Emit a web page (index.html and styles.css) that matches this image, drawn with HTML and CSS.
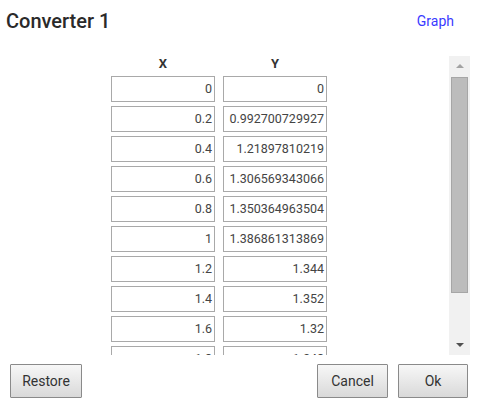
FILE: index.html
```html
<!DOCTYPE html>
<html>
<head>
<meta charset="utf-8">
<link rel="stylesheet" href="styles.css">
</head>
<body>
<div class="dialog">
  <div class="header">
    <div class="title">Converter 1</div>
    <a class="link">Graph</a>
  </div>
  <div class="main">
    <div class="list">
      <div class="grid">
        <div class="colhead">X</div><div class="colhead">Y</div>
        <div class="cell">0</div><div class="cell">0</div>
        <div class="cell">0.2</div><div class="cell">0.992700729927</div>
        <div class="cell">0.4</div><div class="cell">1.21897810219</div>
        <div class="cell">0.6</div><div class="cell">1.306569343066</div>
        <div class="cell">0.8</div><div class="cell">1.350364963504</div>
        <div class="cell">1</div><div class="cell">1.386861313869</div>
        <div class="cell">1.2</div><div class="cell">1.344</div>
        <div class="cell">1.4</div><div class="cell">1.352</div>
        <div class="cell">1.6</div><div class="cell">1.32</div>
        <div class="cell">1.8</div><div class="cell">1.248</div>
      </div>
    </div>
    <div class="scrollbar">
      <div class="arrow up"></div>
      <div class="thumb"></div>
      <div class="arrow down"></div>
    </div>
  </div>
  <div class="footer">
    <button class="btn restore">Restore</button>
    <div class="spacer"></div>
    <button class="btn cancel">Cancel</button>
    <button class="btn ok">Ok</button>
  </div>
</div>
</body>
</html>
```

FILE: styles.css
```css
html, body {
  margin: 0;
  padding: 0;
  background: #fff;
}
body {
  font-family: Roboto, "Liberation Sans", sans-serif;
  color: #333;
}
.dialog {
  width: 478px;
  height: 406px;
  display: flex;
  flex-direction: column;
}
.header {
  display: flex;
  justify-content: space-between;
  align-items: flex-start;
  height: 56px;
  box-sizing: border-box;
  padding: 9px 24px 0 6px;
}
.title {
  font-size: 20px;
  font-weight: 500;
  color: #2a2a2a;
  line-height: 24px;
}
.link {
  font-size: 14px;
  color: #3a3aff;
  line-height: 16px;
  margin-top: 4px;
}
.main {
  display: flex;
  height: 299px;
}
.list {
  width: 449px;
  height: 299px;
  overflow: hidden;
}
.grid {
  display: grid;
  grid-template-columns: 104px 104px;
  grid-template-rows: 16px;
  grid-auto-rows: 26px;
  column-gap: 8px;
  row-gap: 4px;
  padding-left: 111px;
}
.colhead {
  font-size: 13px;
  font-weight: 700;
  color: #333;
  text-align: center;
  line-height: 16px;
}
.cell {
  box-sizing: border-box;
  border: 1px solid #a9a9a9;
  background: #fff;
  font-size: 12.5px;
  color: #444;
  text-align: right;
  padding-right: 2px;
  line-height: 24px;
}
.scrollbar {
  width: 21px;
  height: 299px;
  background: #f1f1f1;
  display: flex;
  flex-direction: column;
  align-items: center;
}
.arrow {
  width: 0;
  height: 0;
  border-left: 4px solid transparent;
  border-right: 4px solid transparent;
}
.arrow.up {
  border-bottom: 4px solid #a3a3a3;
  margin-top: 8px;
}
.arrow.down {
  border-top: 4px solid #505050;
  margin-top: auto;
  margin-bottom: 8px;
}
.thumb {
  box-sizing: border-box;
  width: 17px;
  height: 216px;
  margin-top: 9px;
  background: #bcbcbc;
  border: 1px solid #a6a6a6;
}
.footer {
  display: flex;
  align-items: flex-start;
  padding: 9px 10px 0 10px;
  gap: 10px;
}
.spacer {
  flex: 1;
}
.btn {
  box-sizing: border-box;
  height: 34px;
  border: 1px solid #8a8a8a;
  border-radius: 1px;
  background: linear-gradient(to bottom, #f7f7f7, #d9d9d9);
  font-family: Roboto, "Liberation Sans", sans-serif;
  font-size: 14px;
  color: #333;
  padding: 0;
}
.restore { width: 72px; }
.cancel { width: 71px; }
.ok { width: 70px; }
```
